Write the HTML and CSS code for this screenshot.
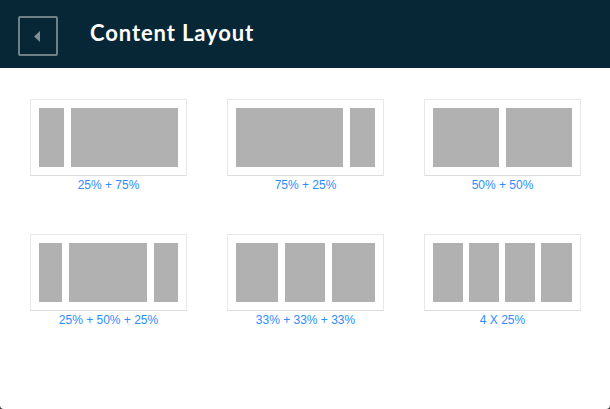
FILE: index.html
```html
<!DOCTYPE html>
<html>
<head>
<meta charset="utf-8">
<link rel="stylesheet" href="styles.css">
</head>
<body>
<div class="panel">
  <header class="header">
    <button class="back" aria-label="Back">
      <svg width="7" height="11" viewBox="0 0 7 11"><polygon points="6,0 6,11 0,5.5" fill="#7f8f97"/></svg>
    </button>
    <h1 class="title">Content Layout</h1>
  </header>
  <main class="grid">
    <div class="item">
      <div class="box"><div class="col" style="width:25px"></div><div class="col" style="width:107px"></div></div>
      <div class="label">25% + 75%</div>
    </div>
    <div class="item">
      <div class="box"><div class="col" style="width:107px"></div><div class="col" style="width:25px"></div></div>
      <div class="label">75% + 25%</div>
    </div>
    <div class="item">
      <div class="box"><div class="col" style="width:66px"></div><div class="col" style="width:66px"></div></div>
      <div class="label">50% + 50%</div>
    </div>
    <div class="item">
      <div class="box"><div class="col" style="width:23px"></div><div class="col" style="width:78px"></div><div class="col" style="width:24px"></div></div>
      <div class="label">25% + 50% + 25%</div>
    </div>
    <div class="item">
      <div class="box"><div class="col" style="width:42px"></div><div class="col" style="width:40px"></div><div class="col" style="width:43px"></div></div>
      <div class="label">33% + 33% + 33%</div>
    </div>
    <div class="item">
      <div class="box four"><div class="col" style="width:30px"></div><div class="col" style="width:30px"></div><div class="col" style="width:30px"></div><div class="col" style="width:31px"></div></div>
      <div class="label">4 X 25%</div>
    </div>
  </main>
</div>
</body>
</html>
```
FILE: styles.css
```css
html, body {
  margin: 0;
  padding: 0;
  background: #3a3a3a;
}
.panel {
  width: 610px;
  height: 409px;
  background: #ffffff;
  border-radius: 0 0 4px 4px;
  overflow: hidden;
}
.header {
  height: 68px;
  box-sizing: border-box;
  background: #082736;
  display: flex;
  align-items: flex-start;
  padding: 16px 18px 0 18px;
}
.back {
  width: 40px;
  height: 40px;
  box-sizing: border-box;
  border: 2px solid #6f8089;
  border-radius: 2px;
  background: transparent;
  padding: 0;
  margin: 0;
  display: flex;
  align-items: center;
  justify-content: center;
}
.back svg {
  display: block;
  margin-left: -2px;
}
.title {
  margin: 0 0 0 32px;
  font-family: Lato, "Open Sans", sans-serif;
  font-weight: 700;
  font-size: 22px;
  line-height: 34px;
  color: #ffffff;
  letter-spacing: 0.9px;
}
.grid {
  display: grid;
  grid-template-columns: repeat(3, 157px);
  column-gap: 40px;
  row-gap: 41px;
  padding: 31px 0 0 30px;
}
.item {
  display: flex;
  flex-direction: column;
  align-items: stretch;
}
.box {
  box-sizing: border-box;
  width: 157px;
  height: 77px;
  border: 1px solid #e8e8e8;
  border-bottom-color: #dcdcdc;
  padding: 8px;
  display: flex;
  gap: 7px;
}
.box.four {
  gap: 6px;
}
.col {
  background: #b1b1b1;
  height: 59px;
  flex: none;
}
.label {
  font-family: "Liberation Sans", Arial, sans-serif;
  font-size: 12px;
  line-height: 16px;
  padding-top: 1px;
  color: #2d8cff;
  text-align: center;
}
```
